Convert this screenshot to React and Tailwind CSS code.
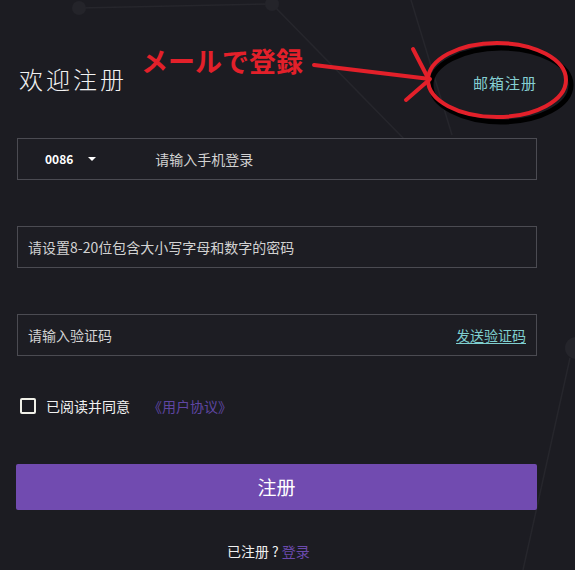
import React from 'react';

const font = { fontFamily: '"Noto Sans CJK SC", "Noto Sans", sans-serif' };

const Backdrop = () => (
  <svg className="pointer-events-none absolute inset-0" width="575" height="570">
    <g stroke="#26262c" strokeWidth="1.5" fill="none">
      <line x1="79" y1="8" x2="272" y2="4" />
      <line x1="272" y1="4" x2="405" y2="140" />
      <line x1="411" y1="0" x2="452" y2="135" />
      <line x1="570" y1="358" x2="523" y2="570" />
    </g>
    <circle cx="79" cy="8" r="7" fill="#24242a" />
    <circle cx="272" cy="4" r="7" fill="#24242a" />
    <circle cx="576" cy="348" r="11" fill="#25252b" />
  </svg>
);

const Annotation = () => (
  <>
    <svg className="pointer-events-none absolute inset-0" width="575" height="570">
      <ellipse cx="501" cy="85" rx="70" ry="37" fill="none" stroke="#000" strokeWidth="5" />
      <ellipse cx="497" cy="80" rx="69" ry="37" fill="none" stroke="#e3202a" strokeWidth="4" />
      <g stroke="#e3202a" strokeWidth="4" strokeLinecap="round">
        <line x1="314" y1="65" x2="430" y2="79" />
        <line x1="413" y1="49" x2="429" y2="80" />
        <line x1="406" y1="100" x2="429" y2="80" />
      </g>
    </svg>
    <div
      className="absolute left-[141px] top-[47px] text-[27px] font-bold leading-none text-[#e3202a]"
      style={{ fontFamily: '"Noto Sans CJK JP", sans-serif' }}
    >
      メールで登録
    </div>
  </>
);

const Field = ({ children }) => (
  <div className="flex h-[42px] items-center border border-[#4b4b52] bg-[#1d1d23] px-[10px] text-[14px] text-[#d2d2d2]">
    {children}
  </div>
);

export default function App() {
  return (
    <div className="relative h-[570px] w-[575px] overflow-hidden bg-[#1c1c22]" style={font}>
      <Backdrop />
      <div className="relative ml-[17px] w-[520px]">
        <div className="mt-[63px] flex h-[32px] items-baseline justify-between">
          <h1 className="pl-[2px] text-[24px] leading-[32px] font-light tracking-[3px] text-[#f2f2f2]">欢迎注册</h1>
          <span className="text-[15px] tracking-[1px] text-[#86cfd3]">邮箱注册</span>
        </div>

        <div className="mt-[43px]">
          <Field>
            <span className="ml-[17px] text-[12px] font-bold text-white">0086</span>
            <span className="ml-[15px] h-0 w-0 border-x-[4px] border-t-[4px] border-x-transparent border-t-white" />
            <span className="ml-[59px]">请输入手机登录</span>
          </Field>
        </div>

        <div className="mt-[46px]">
          <Field>
            <span>请设置8-20位包含大小写字母和数字的密码</span>
          </Field>
        </div>

        <div className="mt-[46px]">
          <Field>
            <span className="flex-1">请输入验证码</span>
            <span className="text-[#7fcfcf] underline underline-offset-2">发送验证码</span>
          </Field>
        </div>

        <div className="mt-[40px] flex h-[20px] items-center text-[14px]">
          <span className="ml-[3px] h-[16px] w-[16px] rounded-[2px] border-2 border-[#f0f0e8]" />
          <span className="ml-[10px] text-[#f0f0f0]">已阅读并同意</span>
          <span className="ml-[18px] text-[#5f46a3]">《用户协议》</span>
        </div>

        <button className="mt-[48px] flex h-[46px] w-[521px] -ml-[1px] items-center justify-center rounded-[2px] bg-[#714bb0] text-[19px] text-white">
          注册
        </button>

        <div className="mt-[31px] flex pl-[210px] text-[14px] leading-[20px] text-[#f0f0f0]">
          <span>已注册</span>
          <span className="mx-[3px]">?</span>
          <span className="text-[#6b4aad]">登录</span>
        </div>
      </div>
      <Annotation />
    </div>
  );
}
